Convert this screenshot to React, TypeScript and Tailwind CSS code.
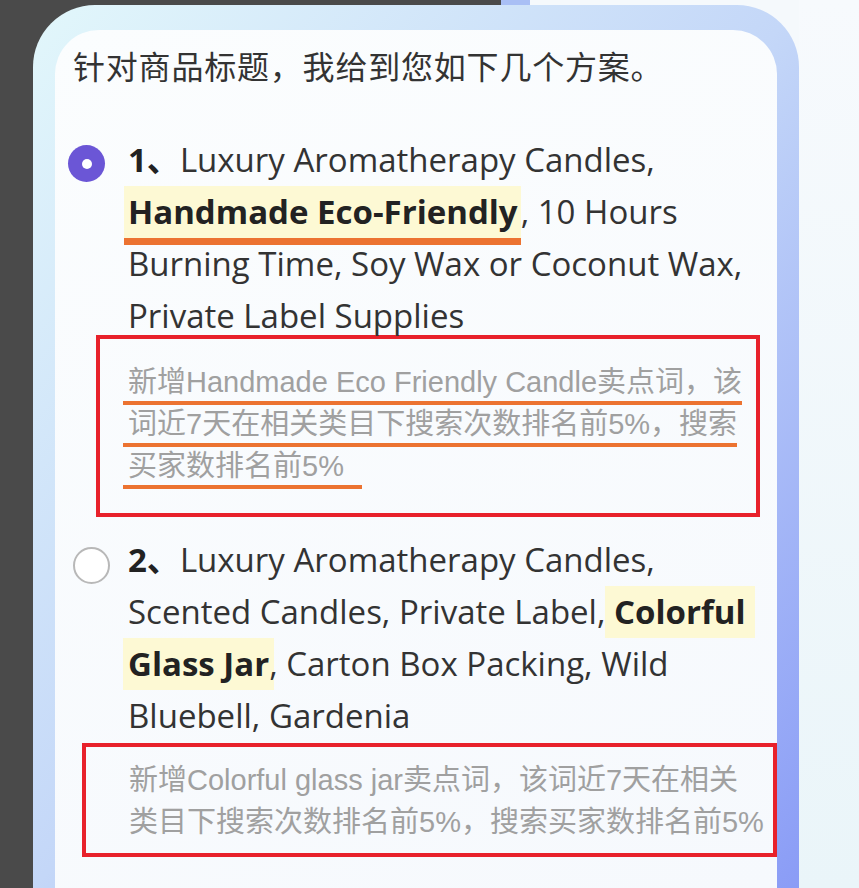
const SANS = "font-['Open_Sans','Noto_Sans_CJK_SC',sans-serif]";
const CJK = "font-['Noto_Sans_CJK_SC','Noto_Sans',sans-serif]";
const NOTE = "font-['Liberation_Sans','Noto_Sans_CJK_SC',sans-serif]";

function Mark({ children, className = "" }: { children: React.ReactNode; className?: string }) {
  return <span className={`inline-block bg-[#fdf9d4] font-bold text-[#222] ${className}`}>{children}</span>;
}

function Note({ lines, underline, className }: { lines: string[]; underline?: boolean; className: string }) {
  return (
    <div className={`border-4 border-[#e8212b] ${NOTE} text-[29px] text-[#a0a0a0] ${className}`}>
      {lines.map((line, i) =>
        underline ? (
          <div key={i} className="flex whitespace-nowrap">
            <span
              className={`-ml-[5px] block border-b-4 border-[#ec7331] pl-[5px] leading-[38px] ${
                i === lines.length - 1 ? "pr-[18px]" : ""
              }`}
            >
              {line}
            </span>
          </div>
        ) : (
          <div key={i} className="whitespace-nowrap leading-[42px]">
            {line}
          </div>
        )
      )}
    </div>
  );
}

export default function App() {
  return (
    <div className="flex h-[888px] w-[859px] overflow-hidden">
      <div className="w-[33px] bg-[#4a4a4a]" />

      <div className="flex w-[766px] flex-col bg-[linear-gradient(90deg,#4a4a4a_468px,#a9bff5_468px,#a9bff5_497px,#f5f9fc_497px)]">
        <div className="h-[5px]" />
        <div className="flex flex-1 flex-col rounded-t-[62px] bg-[linear-gradient(to_bottom_right,#e2f7fb,#c4d7f8_50%,#8a9cf6)] px-[22px] pt-[25px]">
          <div className="flex-1 rounded-t-[44px] bg-[linear-gradient(160deg,#fbfdfe,#f6f9fd)] pl-[13px] pt-[15px]">
            <h1 className={`ml-[5px] ${CJK} text-[32px] leading-[40px] tracking-[0.8px] text-[#333]`}>
              针对商品标题，我给到您如下几个方案。
            </h1>

            <div className={`mt-[49px] flex ${SANS} text-[33px] leading-[52px] text-[#333]`}>
              <div className="w-[60px] shrink-0 pt-[11px]">
                <div className="flex h-[37px] w-[37px] items-center justify-center rounded-full bg-[#6b56d6]">
                  <div className="h-[10px] w-[10px] rounded-full bg-white" />
                </div>
              </div>
              <div>
                <div className="whitespace-nowrap">
                  <span className="font-bold text-[#222]">1、</span>Luxury Aromatherapy Candles,
                </div>
                <div className="whitespace-nowrap">
                  <Mark className="-mb-[7px] -ml-[4px] border-b-[7px] border-[#ec7331] pl-[4px] pr-[3px]">
                    Handmade Eco-Friendly
                  </Mark>
                  , 10 Hours
                </div>
                <div className="whitespace-nowrap">Burning Time, Soy Wax or Coconut Wax,</div>
                <div className="whitespace-nowrap">Private Label Supplies</div>

                <Note
                  underline
                  className="-ml-[32px] mt-[-7px] w-[664px] pb-[24px] pl-[28px] pt-[24px]"
                  lines={[
                    "新增Handmade Eco Friendly Candle卖点词，该",
                    "词近7天在相关类目下搜索次数排名前5%，搜索",
                    "买家数排名前5%",
                  ]}
                />
              </div>
            </div>

            <div className={`mt-[17px] flex ${SANS} text-[33px] leading-[52px] text-[#333]`}>
              <div className="w-[60px] shrink-0 pl-[5px] pt-[13px]">
                <div className="h-[37px] w-[37px] rounded-full border-2 border-[#b8b8b8] bg-white" />
              </div>
              <div>
                <div className="whitespace-nowrap">
                  <span className="font-bold text-[#222]">2、</span>Luxury Aromatherapy Candles,
                </div>
                <div className="whitespace-nowrap">
                  Scented Candles, Private Label, <Mark className="-mx-[9px] px-[9px]">Colorful</Mark>
                </div>
                <div className="whitespace-nowrap">
                  <Mark className="-mx-[5px] px-[5px]">Glass Jar</Mark>, Carton Box Packing, Wild
                </div>
                <div className="whitespace-nowrap">Bluebell, Gardenia</div>

                <Note
                  className="-ml-[46px] mt-[1px] w-[695px] pb-[10px] pl-[43px] pt-[12px]"
                  lines={["新增Colorful glass jar卖点词，该词近7天在相关", "类目下搜索次数排名前5%，搜索买家数排名前5%"]}
                />
              </div>
            </div>
          </div>
        </div>
      </div>

      <div className="flex-1 bg-[linear-gradient(180deg,#f7fafd,#eaf5f9)]" />
    </div>
  );
}
